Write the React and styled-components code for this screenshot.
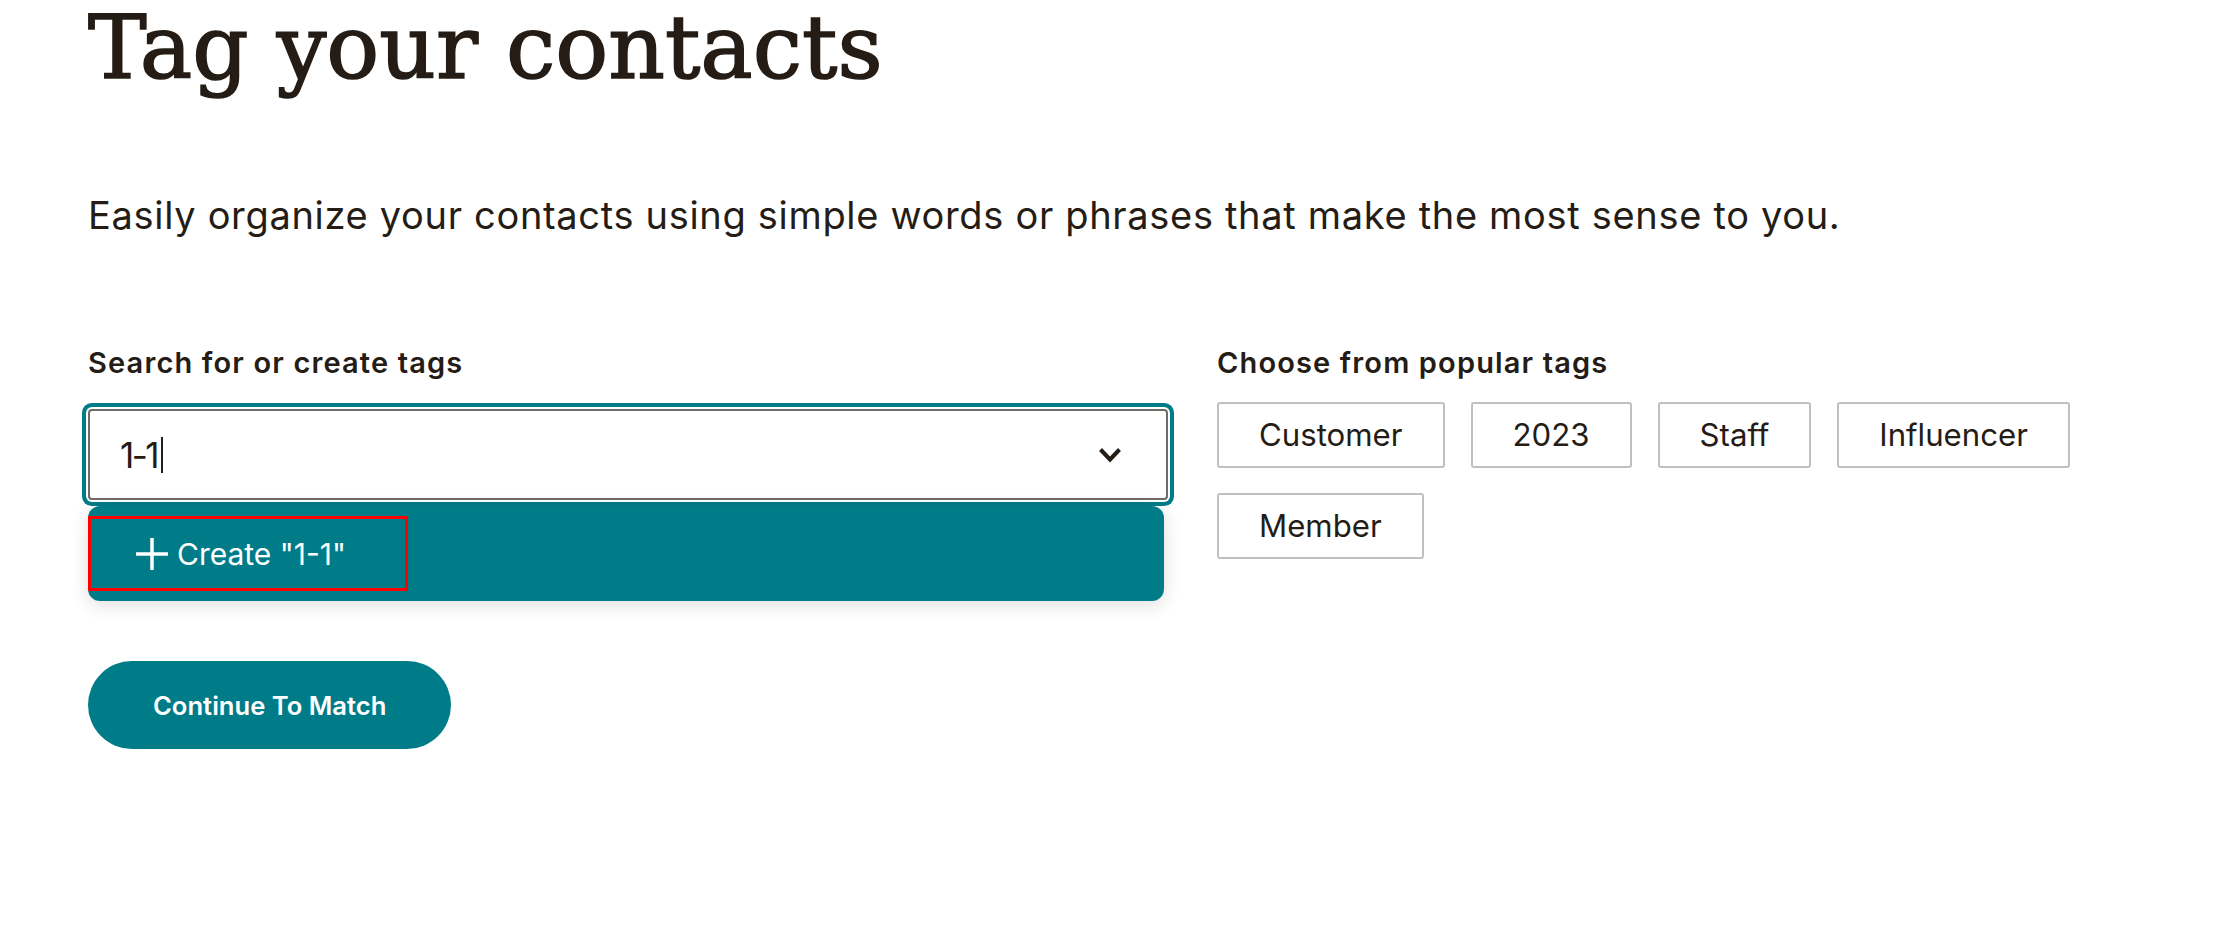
import React from "react";
import styled, { createGlobalStyle } from "styled-components";

const GlobalStyle = createGlobalStyle`
  html, body { margin: 0; padding: 0; background: #ffffff; }
  body { font-family: Inter, "Liberation Sans", sans-serif; color: #241c15; }
  * { box-sizing: border-box; }
`;

const TEAL = "#007c89";
const INK = "#241c15";

const Page = styled.main`
  padding: 0 88px;
`;

const Title = styled.h1`
  margin: 0;
  font-family: "DejaVu Serif", "Liberation Serif", serif;
  font-weight: 400;
  font-size: 88px;
  line-height: 96px;
  color: ${INK};
  -webkit-text-stroke: 1.6px ${INK};
`;

const Lead = styled.p`
  margin: 92px 0 0;
  font-family: Inter, "Liberation Sans", sans-serif;
  font-size: 38px;
  line-height: 54px;
  letter-spacing: 0.68px;
  color: ${INK};
`;

const Columns = styled.div`
  display: grid;
  grid-template-columns: 1080px 1fr;
  column-gap: 49px;
  margin-top: 101px;
  align-items: start;
`;

const Column = styled.section`
  display: flex;
  flex-direction: column;
`;

const Label = styled.h2`
  margin: 0 0 ${(p) => p.$gap}px;
  font-family: Inter, "Liberation Sans", sans-serif;
  font-size: 29px;
  line-height: 40px;
  font-weight: 600;
  letter-spacing: 1.15px;
  color: ${INK};
`;

const Field = styled.div`
  height: 91px;
  display: flex;
  align-items: center;
  justify-content: space-between;
  padding: 0 44px 0 30px;
  border: 2px solid #6f6b67;
  border-radius: 4px;
  background: #fff;
  box-shadow: 0 0 0 2px #ffffff, 0 0 0 6px ${TEAL};
`;

const Value = styled.span`
  display: flex;
  align-items: center;
  font-size: 35px;
  line-height: 48px;
  letter-spacing: -2.5px;
  color: ${INK};
`;

const Caret = styled.span`
  display: inline-block;
  width: 2px;
  height: 36px;
  margin-left: 4px;
  background: ${INK};
`;

const Menu = styled.div`
  margin-top: 6px;
  width: 1076px;
  height: 95px;
  padding-top: 10px;
  background: ${TEAL};
  border-radius: 12px;
  box-shadow: 0 4px 18px rgba(36, 28, 21, 0.14);
`;

const Option = styled.div`
  width: 320px;
  height: 75px;
  display: flex;
  align-items: center;
  gap: 9px;
  padding-left: 45px;
  border: 3px solid ${(p) => (p.$highlight ? "#ff0000" : "transparent")};
  color: #ffffff;
  font-size: 30px;
  line-height: 40px;
`;

const Tags = styled.div`
  display: flex;
  flex-wrap: wrap;
  gap: 25px 26px;
  padding-right: 40px;
`;

const Tag = styled.button`
  height: 66px;
  padding: 0 40px;
  border: 2px solid #c2c0bc;
  border-radius: 3px;
  background: #ffffff;
  font-family: Inter, "Liberation Sans", sans-serif;
  font-size: 31.2px;
  color: ${INK};
  cursor: pointer;
`;

const Primary = styled.button`
  margin-top: 60px;
  height: 88px;
  padding: 0 65px;
  border: none;
  border-radius: 44px;
  background: ${TEAL};
  color: #ffffff;
  font-family: Inter, "Liberation Sans", sans-serif;
  font-size: 25.6px;
  font-weight: 600;
  cursor: pointer;
`;

const Chevron = () => (
  <svg width="24" height="16" viewBox="0 0 24 16" fill="none">
    <path d="M2.5 2.5 L12 12.5 L21.5 2.5" stroke={INK} strokeWidth="4" strokeLinejoin="miter" />
  </svg>
);

const Plus = () => (
  <svg width="32" height="32" viewBox="0 0 32 32" fill="none">
    <path d="M16 0 V32 M0 16 H32" stroke="#ffffff" strokeWidth="3.5" />
  </svg>
);

const popular = ["Customer", "2023", "Staff", "Influencer", "Member"];

export default function App() {
  return (
    <>
      <GlobalStyle />
      <Page>
        <Title>Tag your contacts</Title>
        <Lead>Easily organize your contacts using simple words or phrases that make the most sense to you.</Lead>
        <Columns>
          <Column>
            <Label $gap={26}>Search for or create tags</Label>
            <Field>
              <Value>
                1-1
                <Caret />
              </Value>
              <Chevron />
            </Field>
            <Menu>
              <Option $highlight>
                <Plus />
                <span>Create "1-1"</span>
              </Option>
            </Menu>
          </Column>
          <Column>
            <Label $gap={19}>Choose from popular tags</Label>
            <Tags>
              {popular.map((t) => (
                <Tag key={t}>{t}</Tag>
              ))}
            </Tags>
          </Column>
        </Columns>
        <Primary>Continue To Match</Primary>
      </Page>
    </>
  );
}
